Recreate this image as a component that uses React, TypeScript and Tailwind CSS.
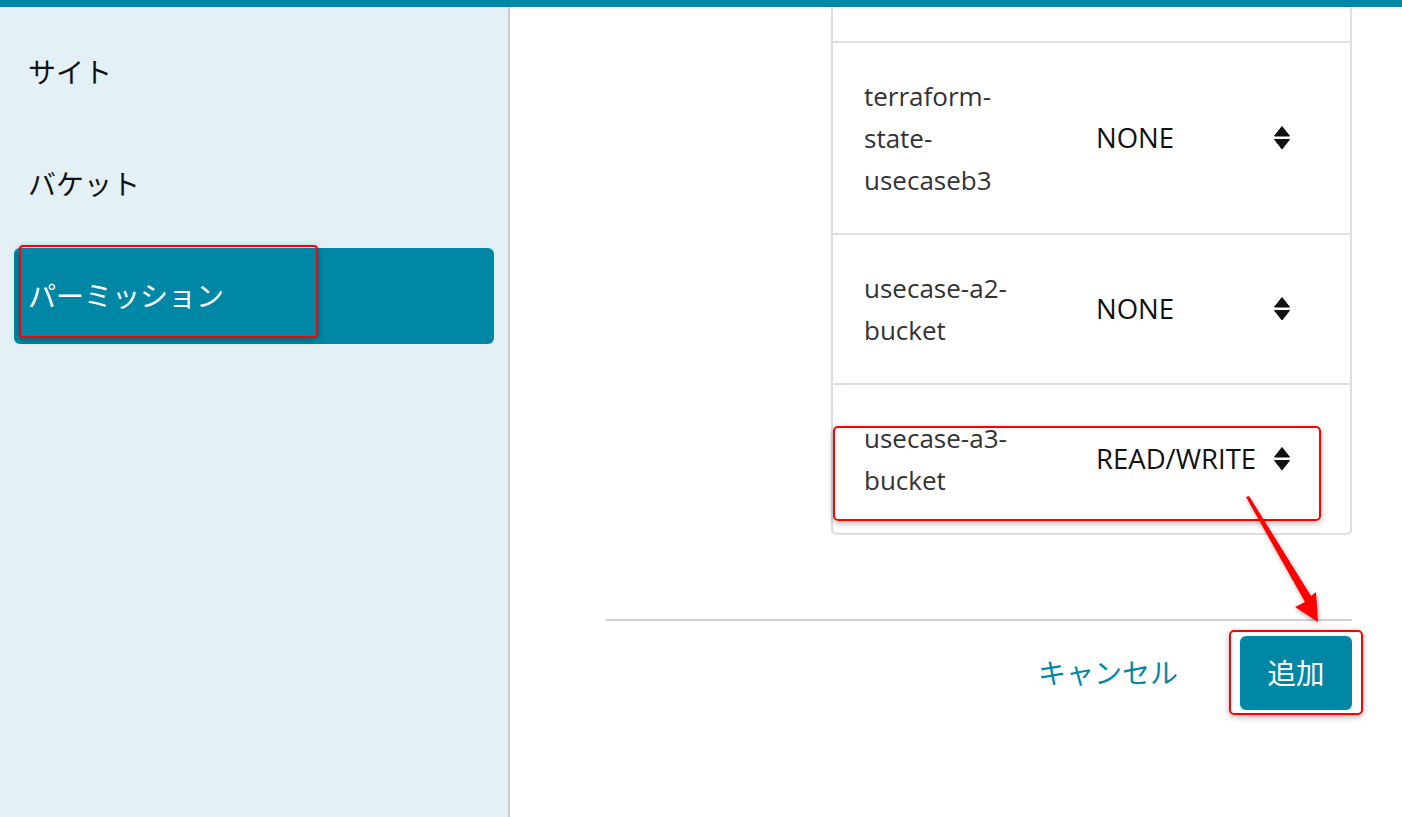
import React from "react";

const FONT = '"Open Sans", "Noto Sans CJK JP", sans-serif';

function SortIcon() {
  return (
    <svg width="16" height="24" viewBox="0 0 16 24" className="shrink-0">
      <path d="M8 0.5 L15.5 10 L0.5 10 Z" fill="#111" stroke="#111" strokeWidth="1" strokeLinejoin="round" />
      <path d="M0.5 13.5 L15.5 13.5 L8 23 Z" fill="#111" stroke="#111" strokeWidth="1" strokeLinejoin="round" />
    </svg>
  );
}

function Row({ name, value, last }: { name: string[]; value: string; last?: boolean }) {
  return (
    <div
      className={
        "flex items-center py-[32px] pl-[31px] " +
        (last ? "border-b-2 border-[#dcdde5] rounded-b-[5px]" : "border-b-2 border-[#dcdde5]")
      }
    >
      <div className="w-[180px] text-[26px] leading-[42px] text-[#333]">
        {name.map((l, i) => (
          <div key={i}>{l}</div>
        ))}
      </div>
      <div className="ml-[52px] flex w-[194px] items-center justify-between text-[27.5px] leading-[42px] text-[#111]">
        <span>{value}</span>
        <SortIcon />
      </div>
    </div>
  );
}

export default function App() {
  return (
    <div className="relative flex h-[817px] w-full flex-col overflow-hidden bg-white" style={{ fontFamily: FONT }}>
      <div className="h-[7px] w-full shrink-0 bg-[#0087a6]" />
      <div className="flex flex-1">
        <aside className="flex w-[510px] shrink-0 flex-col gap-4 border-r-2 border-[#c9cad5] bg-[#e3f1f6] px-[14px] pt-[17px]">
          <div className="flex h-[96px] items-center px-[14px] text-[28px] text-[#111]">サイト</div>
          <div className="flex h-[96px] items-center px-[14px] text-[28px] text-[#111]">バケット</div>
          <div className="flex h-[96px] items-center rounded-[6px] bg-[#0087a6] px-[14px] text-[28px] text-white">
            パーミッション
          </div>
        </aside>
        <main className="flex flex-1 flex-col pl-[96px] pr-[50px]">
          <div className="ml-auto w-[521px] border-x-2 border-[#dcdde5] rounded-b-[5px]">
            <div className="h-[36px] border-b-2 border-[#dcdde5]" />
            <Row name={["terraform-", "state-", "usecaseb3"]} value="NONE" />
            <Row name={["usecase-a2-", "bucket"]} value="NONE" />
            <Row name={["usecase-a3-", "bucket"]} value="READ/WRITE" last />
          </div>
          <div className="mt-[84px] h-[2px] w-full bg-[#cfcfdb]" />
          <div className="mt-[15px] flex items-center justify-end gap-[62px]">
            <button className="text-[28px] text-[#0087a6]">キャンセル</button>
            <button className="flex h-[74px] w-[112px] items-center justify-center rounded-[6px] bg-[#0087a6] text-[28.5px] text-white">
              追加
            </button>
          </div>
        </main>
      </div>

      {/* annotations */}
      <div className="pointer-events-none absolute left-[19px] top-[245px] h-[93px] w-[299px] rounded-[4px] border-2 border-[#ff0000] shadow-[0_2px_6px_rgba(0,0,0,0.35)]" />
      <div className="pointer-events-none absolute left-[833px] top-[426px] h-[95px] w-[488px] rounded-[5px] border-2 border-[#ff0000] shadow-[0_2px_6px_rgba(0,0,0,0.3)]" />
      <div className="pointer-events-none absolute left-[1229px] top-[630px] h-[85px] w-[134px] rounded-[5px] border-2 border-[#ff0000] shadow-[0_2px_6px_rgba(0,0,0,0.3)]" />
      <svg className="pointer-events-none absolute left-0 top-0" width="1402" height="817">
        <polygon
          points="1246,497 1249,496 1311,596 1316,592 1318,622 1295,607 1305,602"
          fill="#ff0000"
          style={{ filter: "drop-shadow(1px 2px 2px rgba(0,0,0,0.35))" }}
        />
      </svg>
    </div>
  );
}
